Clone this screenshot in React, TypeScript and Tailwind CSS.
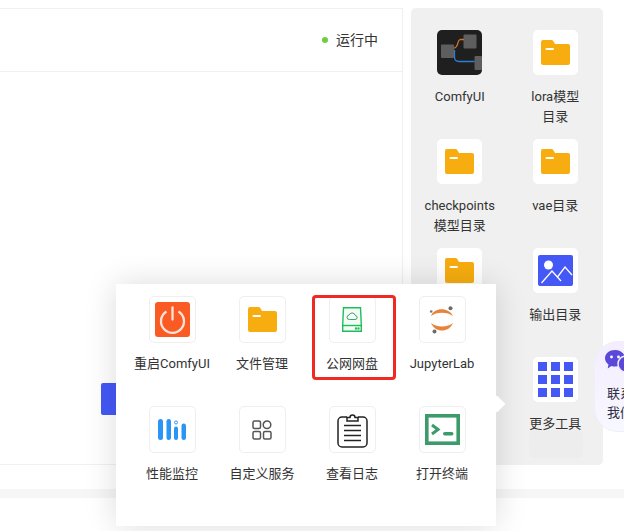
import type { ReactNode } from "react";

const Folder = () => (
  <svg width="29" height="25" viewBox="0 0 29 25">
    <path d="M0 2a2 2 0 0 1 2-2h8.500a2 2 0 0 1 1.600.8L14 4h13a2 2 0 0 1 2 2v17a2 2 0 0 1-2 2H2a2 2 0 0 1-2-2z" fill="#f7ad0f" />
    <rect x="4.500" y="8" width="8.500" height="2" rx="1" fill="#fff" />
  </svg>
);

const Comfy = () => (
  <svg width="45" height="45" viewBox="0 0 45 45" className="rounded-[5px] bg-[#1f1f1f]">
    <rect x="4" y="14.500" width="13" height="13.500" rx="1" fill="#5e5e5e" />
    <rect x="26.500" y="4.500" width="13" height="14" rx="1" fill="#5e5e5e" />
    <rect x="37.500" y="26" width="7.500" height="14" rx="1" fill="#5e5e5e" />
    <path d="M17 18c4.500 0 3-7.500 6-8.500h4" fill="none" stroke="#c9772e" strokeWidth="1.300" />
    <path d="M17.500 20v7c0 3 1.500 4.500 4.500 4.500h15.500" fill="none" stroke="#2d7fd0" strokeWidth="1.300" />
  </svg>
);

const Picture = () => (
  <svg width="35" height="31" viewBox="0 0 35 31">
    <rect width="35" height="31" rx="2" fill="#4458f6" />
    <circle cx="10.500" cy="10" r="4.500" fill="#fff" />
    <path d="M3.500 28l10.500-12 9 10M19.500 22l7.500-10 7 8" fill="none" stroke="#fff" strokeWidth="1.300" />
  </svg>
);

const Grid = () => (
  <div className="grid grid-cols-3 gap-[4px]">
    {Array.from({ length: 9 }, (_, i) => (
      <div key={i} className="h-[9px] w-[9px] bg-[#4458f6]" />
    ))}
  </div>
);

const Power = () => (
  <svg width="35" height="35" viewBox="0 0 35 35">
    <rect width="35" height="35" rx="3" fill="#fa5a24" />
    <path d="M11.500 9.500a11.500 11.500 0 1 0 12 0" fill="none" stroke="#fde3d8" strokeWidth="2.300" />
    <path d="M17.500 5.500v12" fill="none" stroke="#fde3d8" strokeWidth="2.300" strokeLinecap="round" />
  </svg>
);

const Disk = () => (
  <svg width="20" height="25" viewBox="0 0 20 25" fill="none" stroke="#1fbe5b" strokeWidth="1.400">
    <path d="M1.500.7h17l.8 17.300v6.300H.7V18z" fill="#f4fcf7" />
    <path d="M.7 18.500h18.600" />
    <path d="M7.500 12.500h5.500a2 2 0 0 0 .3-4 3.300 3.300 0 0 0-6.300-.4 2.200 2.200 0 0 0 .5 4.400z" stroke="#158a42" strokeWidth="0.800" />
    <circle cx="14" cy="21.500" r="0.500" fill="#1fbe5b" />
    <circle cx="16.500" cy="21.500" r="0.500" fill="#1fbe5b" />
  </svg>
);

const Jupyter = () => (
  <svg width="26" height="28" viewBox="0 0 26 28">
    <path d="M2 10C5 1 20 1 24 10 19 5.500 7 5.500 2 10z" fill="#e8833a" />
    <path d="M2 17c5 4.500 17 4.500 22 0-4 10-18 10-22 0z" fill="#e8833a" />
    <circle cx="21.500" cy="2.200" r="2" fill="#6b6b6b" />
    <circle cx="2.200" cy="5.500" r="1.300" fill="#7a7a7a" />
    <circle cx="5.500" cy="25.500" r="2" fill="#6b6b6b" />
  </svg>
);

const Bars = () => (
  <svg width="29" height="22" viewBox="0 0 29 22" fill="#2b95f5">
    <rect x="0" y="0" width="5" height="21" rx="2.500" />
    <rect x="8.500" y="0" width="4.500" height="21" rx="2.200" />
    <rect x="16" y="7.500" width="4" height="13.500" rx="2" />
    <circle cx="18" cy="3.500" r="1.500" fill="none" stroke="#2b95f5" />
    <rect x="23.500" y="4.500" width="4.500" height="16.500" rx="2.200" />
  </svg>
);

const Apps = () => (
  <svg width="20" height="20" viewBox="0 0 20 20" fill="none" stroke="#555" strokeWidth="1.500">
    <rect x="1" y="1" width="7.500" height="7.500" rx="1.500" />
    <circle cx="15" cy="4.800" r="3.800" />
    <rect x="1" y="11.500" width="7.500" height="7.500" rx="1.500" />
    <rect x="11.500" y="11.500" width="7.500" height="7.500" rx="1.500" />
  </svg>
);

const Clipboard = () => (
  <svg width="31" height="36" viewBox="0 0 31 36" fill="none" stroke="#222" strokeWidth="1.500">
    <path d="M10 5H5a4 4 0 0 0-4 4v22a4 4 0 0 0 4 4h21a4 4 0 0 0 4-4V9a4 4 0 0 0-4-4h-5" />
    <path d="M10 9V5.500h3a2.500 2.500 0 0 1 5 0h3V9z" />
    <path d="M7 13.500h17M7 18.500h17M7 23.500h17M7 28.500h17" strokeWidth="1.300" />
  </svg>
);

const Terminal = () => (
  <svg width="35" height="31" viewBox="0 0 35 31">
    <rect x="1.800" y="1.800" width="31.400" height="27.400" fill="none" stroke="#3d9a6a" strokeWidth="3.600" />
    <path d="M7 11l6 4.500-6 4.500" fill="none" stroke="#3d9a6a" strokeWidth="3" />
    <rect x="18" y="18" width="10.500" height="3.500" rx="1.700" fill="#3d9a6a" />
  </svg>
);

const panelTools: { icon: ReactNode; lines: string[] }[] = [
  { icon: <Comfy />, lines: ["ComfyUI"] },
  { icon: <Folder />, lines: ["lora模型", "目录"] },
  { icon: <Folder />, lines: ["checkpoints", "模型目录"] },
  { icon: <Folder />, lines: ["vae目录"] },
  { icon: <Folder />, lines: ["输入目录"] },
  { icon: <Picture />, lines: ["输出目录"] },
  { icon: null, lines: [] },
  { icon: <Grid />, lines: ["更多工具"] },
];

const popoverTools: { icon: ReactNode; label: string }[] = [
  { icon: <Power />, label: "重启ComfyUI" },
  { icon: <Folder />, label: "文件管理" },
  { icon: <Disk />, label: "公网网盘" },
  { icon: <Jupyter />, label: "JupyterLab" },
  { icon: <Bars />, label: "性能监控" },
  { icon: <Apps />, label: "自定义服务" },
  { icon: <Clipboard />, label: "查看日志" },
  { icon: <Terminal />, label: "打开终端" },
];

export default function App() {
  return (
    <div className="relative h-[531px] w-[624px] overflow-hidden bg-white font-['Roboto','Noto_Sans_CJK_SC',sans-serif] text-[13px] leading-[20px] text-[#333]">
      <div className="flex gap-[8px] pt-[8px]">
        <main className="flex h-[457px] w-[403px] flex-col border-t border-r border-b border-[#f0f0f0]">
          <header className="flex h-[63px] items-center justify-end gap-[8px] border-b border-[#f0f0f0] pr-[24px] text-[14px]">
            <span className="h-[6px] w-[6px] rounded-full bg-[#6fcf3f]" />
            <span>运行中</span>
          </header>
          <div className="pt-[311px] pl-[101px]">
            <div className="h-[32px] w-[120px] rounded-[2px] bg-[#4458f6]" />
          </div>
        </main>
        <aside className="grid h-[457px] w-[192px] grid-cols-2 auto-rows-[109px] rounded-[5px] bg-[#f0f0f0] pt-[22px] pl-[1px]">
          {panelTools.map((tool, i) => (
            <div key={i} className="relative flex flex-col items-center">
              {tool.icon && (
                <div className="flex h-[45px] w-[45px] items-center justify-center rounded-[5px] bg-white">{tool.icon}</div>
              )}
              {i === 7 && <div className="absolute top-[73px] left-[21px] h-[28px] w-[54px] rounded-[4px] bg-[#ededed]" />}
              <div className="relative mt-[12px] text-center whitespace-nowrap">
                {tool.lines.map(line => (
                  <div key={line}>{line}</div>
                ))}
              </div>
            </div>
          ))}
        </aside>
      </div>
      <div className="mt-[24px] h-[9px] bg-[#f6f6f6]" />

      <div className="absolute top-[341px] left-[594px] h-[91px] w-[100px] rounded-[24px] border border-[#f1eefc] bg-gradient-to-b from-[#f3edff] to-[#f8f8ff] pt-[8px] pl-[12px] text-[#2f2e45]">
        <svg width="32" height="23" viewBox="0 0 32 23" fill="#5a49d8" className="-ml-[2px]">
          <path d="M10 0c5.500 0 10 3.500 10 8.300 0 4.800-4.500 8.300-10 8.300-1.300 0-2.500-.2-3.600-.6L2.700 18.500l.8-4C1.400 13 0 10.800 0 8.300 0 3.500 4.500 0 10 0z" />
          <circle cx="21" cy="14" r="8" stroke="#f3edff" strokeWidth="1.500" />
          <circle cx="6.500" cy="7" r="1.400" fill="#fff" />
          <circle cx="13.500" cy="7" r="1.400" fill="#fff" />
          <circle cx="20" cy="13" r="1.100" fill="#fff" />
        </svg>
        <div className="mt-[11px] leading-[19px]">
          <div>联系</div>
          <div>我们</div>
        </div>
      </div>

      <div className="absolute top-[284px] left-[116px] h-[242px] w-[380px] bg-white pt-[12px] pl-[11px] shadow-[0_0_30px_rgba(0,0,0,0.14)]">
        <div className="grid w-[360px] grid-cols-4 auto-rows-[110px]">
          {popoverTools.map(tool => (
            <div key={tool.label} className="flex flex-col items-center">
              <div className="flex h-[47px] w-[47px] items-center justify-center rounded-[5px] border border-[#eeeeee] bg-white">{tool.icon}</div>
              <div className="mt-[11px] whitespace-nowrap">{tool.label}</div>
            </div>
          ))}
        </div>
        <div className="absolute top-[11px] left-[196px] h-[85px] w-[84px] rounded-[4px] border-[3px] border-[#f02a22]" />
        <div className="absolute top-[114px] left-[375px] h-[12px] w-[12px] rotate-45 bg-white" />
      </div>
    </div>
  );
}
